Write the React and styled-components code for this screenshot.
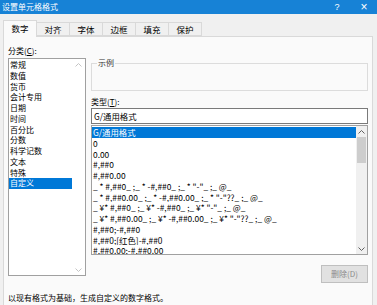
import React from 'react';
import styled, { createGlobalStyle } from 'styled-components';

const GlobalStyle = createGlobalStyle`
  html, body {
    margin: 0;
    padding: 0;
  }
  body {
    width: 377px;
    height: 305px;
    overflow: hidden;
    background: #f0f0f0;
    font-family: "Noto Sans CJK SC", "Noto Sans", sans-serif;
    font-size: 8px;
    color: #000;
  }
`

const Window = styled.div`
  width: 377px;
  height: 305px;
  display: flex;
  flex-direction: column;
  overflow: hidden;
  background: #f0f0f0;
`

const TitleBar = styled.div`
  height: 14px;
  flex: none;
  display: flex;
  align-items: center;
  padding-left: 2px;
  background: #1782d6;
  color: #fff;
`

const Title = styled.div`
  flex: 1;
  font-size: 8px;
  line-height: 14px;
`

const TitleButton = styled.div`
  width: ${p => p.w}px;
  text-align: center;
  font-family: "Liberation Sans", sans-serif;
  font-size: ${p => p.size}px;
  line-height: 14px;
`

const TabBar = styled.div`
  flex: none;
  height: 16px;
  margin-top: 6px;
  padding-left: 4px;
  display: flex;
  align-items: flex-end;
`

const Tab = styled.div`
  position: relative;
  width: 34px;
  height: ${p => p.active ? 17 : 14}px;
  margin-left: -1px;
  margin-bottom: ${p => p.active ? -1 : 0}px;
  box-sizing: border-box;
  border: 1px solid #d9d9d9;
  border-bottom: ${p => p.active ? 'none' : '1px solid #d9d9d9'};
  background: ${p => p.active ? '#fafafa' : '#f0f0f0'};
  z-index: ${p => p.active ? 1 : 0};
  text-align: center;
  font-size: 8.5px;
  line-height: ${p => p.active ? 15 : 12}px;
`

const Panel = styled.div`
  flex: 1;
  margin: 0 4px 0 3px;
  border: 1px solid #d9d9d9;
  background: #fafafa;
  padding: 7px 4px 0 4px;
`

const Body = styled.div`
  display: grid;
  grid-template-columns: 78px 1fr;
  column-gap: 5px;
  height: 239px;
`

const Column = styled.div`
  display: flex;
  flex-direction: column;
  min-width: 0;
`

const Label = styled.div`
  height: ${p => p.h || 14}px;
  line-height: ${p => p.h || 14}px;
  margin-top: ${p => p.mt || 0}px;
`

const ListBox = styled.div`
  height: ${p => p.h}px;
  margin-top: ${p => p.mt || 0}px;
  box-sizing: border-box;
  border: 1px solid #a0a0a0;
  background: #fff;
  display: flex;
  overflow: hidden;
`

const Rows = styled.div`
  flex: 1;
  min-width: 0;
  padding-top: 1px;
`

const Row = styled.div`
  height: 10.75px;
  line-height: 10.75px;
  padding-left: ${p => p.pad || 1}px;
  white-space: nowrap;
  overflow: hidden;
  font-size: ${p => p.size || 8}px;
  background: ${p => p.selected ? '#0078d7' : 'transparent'};
  color: ${p => p.selected ? '#fff' : '#000'};
`

const ScrollBar = styled.div`
  width: ${p => p.w}px;
  flex: none;
  display: flex;
  flex-direction: column;
  background: ${p => p.disabled ? '#fff' : '#f0f0f0'};
`

const Arrow = styled.div`
  height: 11px;
  flex: none;
  display: flex;
  align-items: center;
  justify-content: center;
`

const Track = styled.div`
  flex: 1;
`

const Thumb = styled.div`
  height: 26px;
  margin: 0 1px;
  background: #cdcdcd;
`

const GroupBox = styled.div`
  position: relative;
  height: 28px;
  margin-top: 19px;
  box-sizing: border-box;
  border: 1px solid #dcdcdc;
`

const Legend = styled.span`
  position: absolute;
  top: -7px;
  left: 5px;
  padding: 0 1px;
  background: #fafafa;
  line-height: 12px;
  color: #333;
`

const Input = styled.div`
  height: 16px;
  box-sizing: border-box;
  border: 1px solid #7a7a7a;
  background: #fff;
  padding-left: 2px;
  line-height: 14px;
  font-size: 8.4px;
`

const ButtonRow = styled.div`
  display: flex;
  justify-content: flex-end;
  margin-top: 10px;
`

const Button = styled.div`
  width: 47px;
  height: 18px;
  box-sizing: border-box;
  border: 1px solid #bfbfbf;
  background: #e1e1e1;
  color: #8a8a8a;
  text-align: center;
  line-height: 16px;
`

const Footer = styled.div`
  margin-top: 8px;
  line-height: 14px;
`

const Chevron = ({ down, color }) => (
  <svg width="7" height="4" viewBox="0 0 7 4">
    <path
      d={down ? 'M0.5 0.5 L3.5 3.5 L6.5 0.5' : 'M0.5 3.5 L3.5 0.5 L6.5 3.5'}
      fill="none"
      stroke={color}
      strokeWidth="1"
    />
  </svg>
)

const tabs = ['数字', '对齐', '字体', '边框', '填充', '保护']

const categories = ['常规', '数值', '货币', '会计专用', '日期', '时间', '百分比', '分数', '科学记数', '文本', '特殊', '自定义']

const formats = [
  'G/通用格式',
  '0',
  '0.00',
  '#,##0',
  '#,##0.00',
  '_ * #,##0_ ;_ * -#,##0_ ;_ * "-"_ ;_ @_',
  '_ * #,##0.00_ ;_ * -#,##0.00_ ;_ * "-"??_ ;_ @_',
  '_ ¥* #,##0_ ;_ ¥* -#,##0_ ;_ ¥* "-"_ ;_ @_',
  '_ ¥* #,##0.00_ ;_ ¥* -#,##0.00_ ;_ ¥* "-"??_ ;_ @_',
  '#,##0;-#,##0',
  '#,##0;[红色]-#,##0',
  '#,##0.00;-#,##0.00',
]

export default function App() {
  return (
    <Window>
      <GlobalStyle />
      <TitleBar>
        <Title>设置单元格格式</Title>
        <TitleButton w={28} size={9}>?</TitleButton>
        <TitleButton w={26} size={12}>×</TitleButton>
      </TitleBar>
      <TabBar>
        {tabs.map((t, i) => (
          <Tab key={t} active={i === 0}>{t}</Tab>
        ))}
      </TabBar>
      <Panel>
        <Body>
          <Column>
            <Label>分类(<u>C</u>):</Label>
            <ListBox h={218}>
              <Rows>
                {categories.map((c, i) => (
                  <Row key={c} pad={1} selected={i === categories.length - 1}>{c}</Row>
                ))}
              </Rows>
              <ScrollBar w={13} disabled>
                <Arrow><Chevron color="#c4c4c4" /></Arrow>
                <Track />
                <Arrow><Chevron down color="#c4c4c4" /></Arrow>
              </ScrollBar>
            </ListBox>
          </Column>
          <Column>
            <GroupBox>
              <Legend>示例</Legend>
            </GroupBox>
            <Label h={13} mt={4}>类型(<u>T</u>):</Label>
            <Input>G/通用格式</Input>
            <ListBox h={130} mt={1}>
              <Rows>
                {formats.map((f, i) => (
                  <Row key={f} size={8.4} selected={i === 0}>{f}</Row>
                ))}
              </Rows>
              <ScrollBar w={11}>
                <Arrow><Chevron color="#606060" /></Arrow>
                <Thumb />
                <Track />
                <Arrow><Chevron down color="#606060" /></Arrow>
              </ScrollBar>
            </ListBox>
            <ButtonRow>
              <Button>删除(D)</Button>
            </ButtonRow>
          </Column>
        </Body>
        <Footer>以现有格式为基础，生成自定义的数字格式。</Footer>
      </Panel>
    </Window>
  );
}
